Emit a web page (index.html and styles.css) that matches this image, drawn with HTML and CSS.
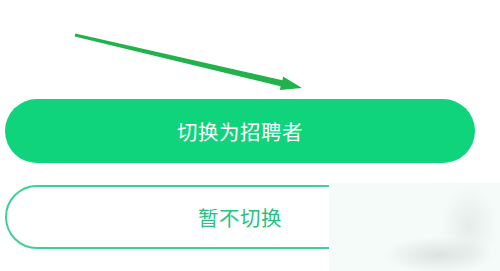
FILE: index.html
```html
<!DOCTYPE html>
<html>

<head>
    <meta charset="UTF-8">
    <meta name="viewport" content="width=device-width, initial-scale=1.0">
    <title>切换身份</title>
    <link rel="stylesheet" href="styles.css">
</head>

<body>
    <div class="page">
        <svg class="arrow" width="470" height="99" viewBox="5 0 470 99">
            <polygon fill="#22b24b" points="75.3,33.6 282.4,80.3 283.1,76.4 302,88 279.9,90 280.6,86.3 74.7,36.4"/>
        </svg>
        <button class="btn btn-main">切换为招聘者</button>
        <button class="btn btn-ghost">暂不切换</button>
    </div>
    <!-- 右下角的模糊遮挡 -->
    <div class="blur-patch"></div>
</body>

</html>
```

FILE: styles.css
```css
* {
    margin: 0;
    padding: 0;
    box-sizing: border-box;
}
body {
    background: #fff;
    width: 500px;
    height: 271px;
    overflow: hidden;
    position: relative;
    font-family: "Noto Sans CJK SC", "Noto Sans", sans-serif;
}
.page {
    display: flex;
    flex-direction: column;
    padding-left: 5px;
    width: 475px;
}
.arrow {
    display: block;
}
.btn {
    width: 470px;
    height: 64px;
    border-radius: 32px;
    font-family: inherit;
    font-size: 20.5px;
    letter-spacing: 0.5px;
    cursor: pointer;
}
.btn-main {
    background: #0fd47c;
    color: #fff;
    border: 0;
}
.btn-ghost {
    margin-top: 22px;
    background: #fff;
    color: #26c27f;
    border: 2px solid #3dd196;
}
.blur-patch {
    position: absolute;
    left: 329px;
    top: 183px;
    width: 171px;
    height: 88px;
    background:
        radial-gradient(ellipse 55px 18px at 110px 72px, rgba(205, 210, 208, 0.6), rgba(230, 235, 233, 0) 100%),
        radial-gradient(ellipse 28px 40px at 140px 42px, rgba(215, 225, 221, 0.55), rgba(240, 245, 243, 0) 100%),
        #f5fbf8;
}
```
